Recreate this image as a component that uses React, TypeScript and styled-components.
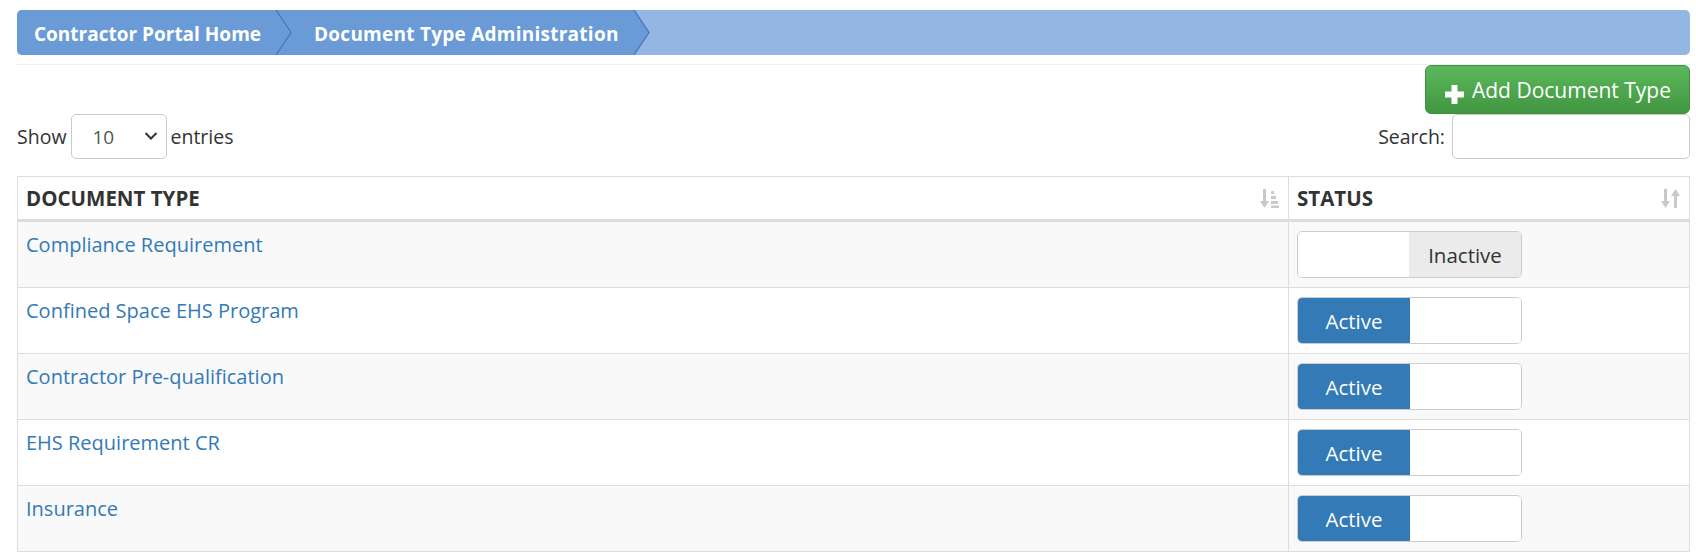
import styled, { createGlobalStyle } from 'styled-components'

const GlobalStyle = createGlobalStyle`
    html, body {
        margin: 0;
        padding: 0;
        background: #ffffff;
    }
    body {
        font-family: "Open Sans", "Liberation Sans", sans-serif;
        color: #333333;
        font-size: 20px;
    }
    * {
        box-sizing: border-box;
    }
`

const Page = styled.div`
    padding: 10px 6px 0 17px;
`

const Breadcrumb = styled.nav`
    height: 45px;
    display: flex;
    align-items: stretch;
    background: #93b7e2;
    border-radius: 5px;
    overflow: hidden;
`

const Crumb = styled.div<{ $first?: boolean }>`
    display: flex;
    align-items: center;
    background: #6a9bd6;
    padding-left: ${p => (p.$first ? '17px' : '22px')};
    color: #ffffff;
    font-weight: 700;
    font-size: 19px;
    white-space: nowrap;
`

const CrumbLabel = styled.span<{ $wide?: boolean }>`
    margin-right: 14px;
    padding-top: 2px;
    letter-spacing: ${p => (p.$wide ? '0.25px' : '0')};
`

const Divider = styled.hr`
    margin: 9px 0 0;
    border: 0;
    border-top: 1px solid #eeeeee;
`

const ActionRow = styled.div`
    display: flex;
    justify-content: flex-end;
`

const AddButton = styled.button`
    display: flex;
    align-items: center;
    gap: 8px;
    height: 49px;
    padding: 0 18px 0 19px;
    font-family: inherit;
    font-size: 21px;
    color: #ffffff;
    background: linear-gradient(to bottom, #5cb85c 0%, #419641 100%);
    border: 1px solid #3e8f3e;
    border-radius: 6px;
    cursor: pointer;
`

const Controls = styled.div`
    display: flex;
    justify-content: space-between;
    align-items: center;
`

const Label = styled.label<{ $gap: number }>`
    display: flex;
    align-items: center;
    gap: ${p => p.$gap}px;
    font-size: 19.5px;
    color: #333333;
`

const SelectWrap = styled.div`
    position: relative;
    width: 96px;
    height: 45px;
`

const Select = styled.select`
    width: 100%;
    height: 100%;
    appearance: none;
    padding: 0 0 0 21px;
    font-family: inherit;
    font-size: 19px;
    color: #555555;
    background: #ffffff;
    border: 1px solid #cccccc;
    border-radius: 5px;
`

const Caret = styled.svg`
    position: absolute;
    right: 9px;
    top: 17px;
    pointer-events: none;
`

const SearchInput = styled.input`
    width: 238px;
    height: 45px;
    border: 1px solid #cccccc;
    border-radius: 5px;
    padding: 0 10px;
    font-family: inherit;
    font-size: 19px;
`

const Table = styled.table`
    width: 100%;
    margin-top: 17px;
    border-collapse: collapse;
    border: 1px solid #dddddd;
`

const Th = styled.th<{ $width?: number }>`
    width: ${p => (p.$width ? `${p.$width}px` : 'auto')};
    height: 44px;
    padding: 0 9px 0 8px;
    text-align: left;
    font-size: 20.5px;
    font-weight: 700;
    color: #333333;
    border: 1px solid #dddddd;
    border-bottom: 3px solid #dddddd;
`

const ThInner = styled.div`
    display: flex;
    justify-content: space-between;
    align-items: center;
`

const Tr = styled.tr<{ $striped: boolean }>`
    background: ${p => (p.$striped ? '#f9f9f9' : '#ffffff')};
`

const Td = styled.td`
    height: 66px;
    padding: 9px 8px;
    vertical-align: top;
    border: 1px solid #dddddd;
    line-height: 28px;
`

const DocLink = styled.a`
    color: #337ab7;
    font-size: 20px;
    font-weight: 500;
    text-decoration: none;
`

const Toggle = styled.div<{ $on: boolean }>`
    display: flex;
    width: 225px;
    height: 47px;
    border: 1px solid #cccccc;
    border-radius: 5px;
    overflow: hidden;
    flex-direction: ${p => (p.$on ? 'row' : 'row-reverse')};
`

const ToggleLabel = styled.div<{ $on: boolean }>`
    width: 112px;
    display: flex;
    align-items: center;
    justify-content: center;
    font-size: 20.5px;
    background: ${p => (p.$on ? '#337ab7' : '#ebebeb')};
    color: ${p => (p.$on ? '#ffffff' : '#333333')};
`

const ToggleHandle = styled.div`
    flex: 1;
    background: #ffffff;
`

const ChevronArrow = ({ behind }: { behind?: string }) => (
    <svg width="17" height="45" viewBox="0 0 17 45" style={{ display: 'block', flexShrink: 0 }}>
        <rect x="0" y="0" width="17" height="45" fill={behind ?? '#93b7e2'} />
        <polygon points="0,0 1,0 16,22.5 1,45 0,45" fill="#6a9bd6" />
        <polyline points="1,0 16,22.5 1,45" fill="none" stroke="#4677bb" strokeWidth="1.3" />
    </svg>
)

const PlusIcon = () => (
    <svg width="19" height="19" viewBox="0 0 19 19" style={{ marginTop: 9 }}>
        <rect x="6.5" y="0" width="6" height="19" fill="#ffffff" />
        <rect x="0" y="6.5" width="19" height="6" fill="#ffffff" />
    </svg>
)

const SortAscIcon = () => (
    <svg width="19" height="19" viewBox="0 0 19 19">
        <g fill="#c9c9c9">
            <rect x="3" y="0" width="3" height="13" />
            <polygon points="0,12 9,12 4.5,19" />
            <rect x="11" y="2" width="3" height="3" />
            <rect x="11" y="7" width="5" height="3" />
            <rect x="11" y="12" width="7" height="3" />
            <rect x="11" y="16.5" width="8" height="2.5" />
        </g>
    </svg>
)

const SortIcon = () => (
    <svg width="19" height="19" viewBox="0 0 19 19">
        <g fill="#c9c9c9">
            <rect x="3" y="0" width="3" height="13" />
            <polygon points="0,12 9,12 4.5,19" />
            <rect x="13" y="6" width="3" height="13" />
            <polygon points="10,7 19,7 14.5,0" />
        </g>
    </svg>
)

const documentTypes = [
    { name: 'Compliance Requirement', active: false },
    { name: 'Confined Space EHS Program', active: true },
    { name: 'Contractor Pre-qualification', active: true },
    { name: 'EHS Requirement CR', active: true },
    { name: 'Insurance', active: true },
]

export default function App() {
    return <>
        <GlobalStyle />
        <Page>
            <Breadcrumb>
                <Crumb $first>
                    <CrumbLabel>Contractor Portal Home</CrumbLabel>
                    <ChevronArrow behind="#6a9bd6" />
                </Crumb>
                <Crumb>
                    <CrumbLabel $wide>Document Type Administration</CrumbLabel>
                    <ChevronArrow />
                </Crumb>
            </Breadcrumb>
            <Divider />
            <ActionRow>
                <AddButton>
                    <PlusIcon />
                    Add Document Type
                </AddButton>
            </ActionRow>
            <Controls>
                <Label $gap={4}>
                    Show
                    <SelectWrap>
                        <Select defaultValue="10">
                            <option value="10">10</option>
                            <option value="25">25</option>
                            <option value="50">50</option>
                            <option value="100">100</option>
                        </Select>
                        <Caret width="14" height="10" viewBox="0 0 14 10">
                            <polyline points="1.5,2 7,7.5 12.5,2" fill="none" stroke="#333" strokeWidth="2" />
                        </Caret>
                    </SelectWrap>
                    entries
                </Label>
                <Label $gap={7}>
                    Search:
                    <SearchInput type="search" />
                </Label>
            </Controls>
            <Table>
                <thead>
                    <tr>
                        <Th>
                            <ThInner>DOCUMENT TYPE <SortAscIcon /></ThInner>
                        </Th>
                        <Th $width={401}>
                            <ThInner>STATUS <SortIcon /></ThInner>
                        </Th>
                    </tr>
                </thead>
                <tbody>
                    {documentTypes.map((doc, i) => (
                        <Tr key={doc.name} $striped={i % 2 === 0}>
                            <Td>
                                <DocLink href="#">{doc.name}</DocLink>
                            </Td>
                            <Td>
                                <Toggle $on={doc.active}>
                                    <ToggleLabel $on={doc.active}>{doc.active ? 'Active' : 'Inactive'}</ToggleLabel>
                                    <ToggleHandle />
                                </Toggle>
                            </Td>
                        </Tr>
                    ))}
                </tbody>
            </Table>
        </Page>
    </>
}
